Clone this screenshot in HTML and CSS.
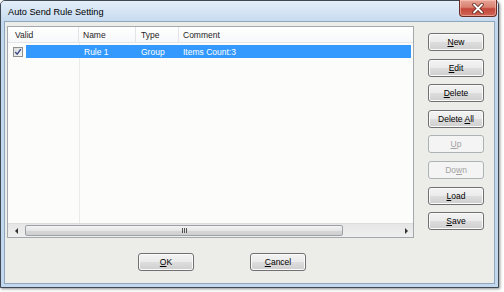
FILE: index.html
```html
<!DOCTYPE html>
<html>
<head>
<meta charset="utf-8">
<link rel="stylesheet" href="styles.css">
</head>
<body>
<div class="window">
  <div class="titlebar">
    <span class="title">Auto Send Rule Setting</span>
    <div class="close">
      <svg width="14" height="11" viewBox="0 0 14 11"><path d="M3 1.5 L11 9.5 M11 1.5 L3 9.5" stroke="#5a1f18" stroke-width="3.4" stroke-linecap="round"/><path d="M3 1.5 L11 9.5 M11 1.5 L3 9.5" stroke="#ffffff" stroke-width="1.8" stroke-linecap="round"/></svg>
    </div>
  </div>
  <div class="frame">
    <div class="client">
      <div class="main">
        <div class="list">
          <div class="header">
            <div class="hcol c1">Valid</div>
            <div class="hcol c2">Name</div>
            <div class="hcol c3">Type</div>
            <div class="hcol c4">Comment</div>
          </div>
          <div class="body">
            <div class="row">
              <div class="cell c1">
                <span class="check"><svg width="8" height="8" viewBox="0 0 8 8"><path d="M1.2 4 L3.2 6.2 L6.8 1.2" fill="none" stroke="#3a4f8a" stroke-width="1.4"/></svg></span>
                <span class="selfill"></span>
              </div>
              <div class="cell c2 sel">Rule 1</div>
              <div class="cell c3 sel">Group</div>
              <div class="cell c4 sel">Items Count:3</div>
            </div>
          </div>
          <div class="hscroll">
            <div class="arrow left"></div>
            <div class="thumb"><span class="grip"></span></div>
            <div class="arrow right"></div>
          </div>
        </div>
        <div class="buttons">
          <button class="btn"><u>N</u>ew</button>
          <button class="btn"><u>E</u>dit</button>
          <button class="btn"><u>D</u>elete</button>
          <button class="btn">Delete <u>A</u>ll</button>
          <button class="btn disabled"><u>U</u>p</button>
          <button class="btn disabled">Do<u>w</u>n</button>
          <button class="btn"><u>L</u>oad</button>
          <button class="btn"><u>S</u>ave</button>
        </div>
      </div>
      <div class="footer">
        <button class="btn"><u>O</u>K</button>
        <button class="btn"><u>C</u>ancel</button>
      </div>
    </div>
  </div>
</div>
</body>
</html>
```

FILE: styles.css
```css
html, body {
  margin: 0;
  padding: 0;
  background: #ffffff;
}
body {
  width: 504px;
  height: 292px;
  overflow: hidden;
  font-family: "Liberation Sans", Arial, sans-serif;
}
.window {
  width: 499px;
  height: 288px;
  box-sizing: border-box;
  border: 1px solid #3e4953;
  border-radius: 5px 5px 0 0;
  background: #c3d8ef;
  box-shadow: 1px 1px 3px rgba(0, 0, 0, 0.45);
  display: flex;
  flex-direction: column;
}
.titlebar {
  height: 20px;
  flex: none;
  display: flex;
  align-items: flex-start;
  background: linear-gradient(#e4eef9, #d3e3f4 60%, #c6daef);
  border-radius: 4px 4px 0 0;
}
.title {
  font-size: 9.2px;
  color: #000;
  padding: 6px 0 0 7px;
}
.close {
  margin-left: auto;
  margin-right: 1px;
  margin-top: -1px;
  width: 38px;
  height: 17px;
  box-sizing: border-box;
  border: 1px solid #6a2c25;
  border-top: none;
  border-radius: 0 0 4px 4px;
  background: linear-gradient(#e8a597 0%, #d98171 45%, #c3473a 55%, #cf6656 100%);
  box-shadow: inset 0 0 0 1px rgba(255, 210, 200, 0.5);
  display: flex;
  align-items: center;
  justify-content: center;
}
.frame {
  flex: 1;
  padding: 0 3px 3px 3px;
  display: flex;
}
.client {
  flex: 1;
  border: 1px solid #8fa6bf;
  background: #ecede9;
  padding: 4px 0 0 2px;
  display: flex;
  flex-direction: column;
}
.main {
  display: flex;
  align-items: flex-start;
}
.list {
  width: 407px;
  height: 212px;
  box-sizing: border-box;
  border: 1px solid #a3a8ad;
  background: #fcfcfb;
  display: flex;
  flex-direction: column;
  font-size: 8.5px;
}
.header {
  height: 16px;
  flex: none;
  display: flex;
  background: linear-gradient(#ffffff, #f7f8f9);
  border-bottom: 1px solid #e4e7ea;
  box-sizing: border-box;
}
.hcol {
  box-sizing: border-box;
  border-right: 1px solid #e2e4e8;
  display: flex;
  align-items: flex-end;
  padding-bottom: 2px;
  color: #1e1e1e;
}
.c1 { width: 71px; }
.c2 { width: 57px; }
.c3 { width: 43px; }
.c4 { flex: 1; }
.hcol.c1 { padding-left: 7px; }
.hcol.c2 { padding-left: 4px; }
.hcol.c3 { padding-left: 5px; }
.hcol.c4 { padding-left: 4px; border-right: none; }
.body {
  flex: 1;
  padding-top: 2px;
  background: linear-gradient(to right, transparent 71px, #ebebeb 71px, #ebebeb 72px, transparent 72px);
}
.row {
  height: 13px;
  display: flex;
  margin-right: 2px;
}
.cell {
  box-sizing: border-box;
  display: flex;
  align-items: center;
}
.cell.sel {
  background: #3399ff;
  color: #ffffff;
}
.cell.c1 { padding-left: 5px; }
.cell.c2 { padding-left: 5px; }
.cell.c3 { padding-left: 5px; }
.cell.c4 { padding-left: 4px; }
.check {
  width: 10px;
  height: 10px;
  box-sizing: border-box;
  border: 1px solid #8e8f8f;
  background: linear-gradient(135deg, #dcdcdc, #f8f8f8);
  display: flex;
  align-items: center;
  justify-content: center;
  flex: none;
}
.selfill {
  flex: 1;
  align-self: stretch;
  margin-left: 3px;
  background: #3399ff;
}
.hscroll {
  height: 14px;
  flex: none;
  display: flex;
  align-items: center;
  background: linear-gradient(#e6e6e6, #efefef);
  border-top: 1px solid #dcdcdc;
  box-sizing: border-box;
  padding: 0 1px;
}
.arrow {
  width: 0;
  height: 0;
  border-top: 3px solid transparent;
  border-bottom: 3px solid transparent;
}
.arrow.left {
  border-right: 3px solid #333;
  margin-left: 6px;
}
.arrow.right {
  border-left: 3px solid #333;
  margin-left: auto;
  margin-right: 4px;
}
.thumb {
  width: 318px;
  height: 11px;
  margin-left: 7px;
  box-sizing: border-box;
  border: 1px solid #9da1a6;
  border-radius: 2px;
  background: linear-gradient(#f3f3f3, #e6e6e6 50%, #d7d7d7 51%, #cfcfcf);
  display: flex;
  align-items: center;
  justify-content: center;
}
.grip {
  width: 5px;
  height: 5px;
  background: repeating-linear-gradient(to right, #555 0, #555 1px, transparent 1px, transparent 2px);
}
.buttons {
  width: 56px;
  margin-left: 14px;
  padding-top: 7px;
  display: flex;
  flex-direction: column;
  gap: 7.6px;
}
.btn {
  width: 56px;
  height: 18px;
  box-sizing: border-box;
  margin: 0;
  padding: 0;
  border: 1px solid #707070;
  border-radius: 3px;
  background: linear-gradient(#f3f3f3 0%, #ebebeb 48%, #dddddd 52%, #cfcfcf 100%);
  box-shadow: inset 0 0 0 1px #fbfbfb;
  font-family: "Liberation Sans", Arial, sans-serif;
  font-size: 8.5px;
  color: #000;
  text-align: center;
  line-height: 16px;
}
.btn.disabled {
  border-color: #adb2b5;
  background: #f4f4f4;
  box-shadow: none;
  color: #a3a3a3;
}
.footer {
  display: flex;
  gap: 56px;
  padding-left: 131px;
  margin-top: 15px;
}
```
